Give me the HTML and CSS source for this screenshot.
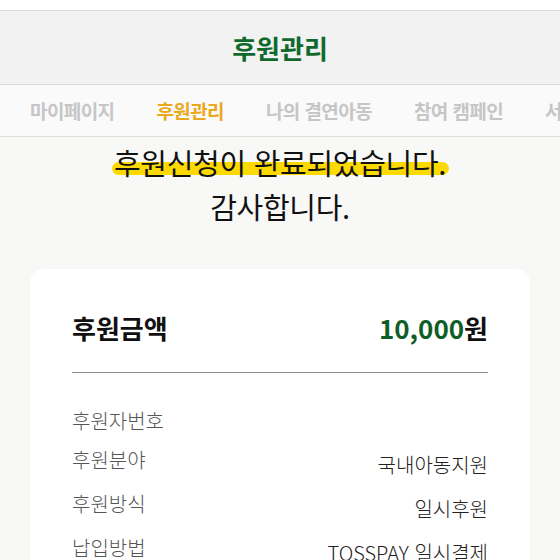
FILE: index.html
```html
<!DOCTYPE html>
<html lang="ko">
<head>
<meta charset="utf-8">
<link rel="stylesheet" href="styles.css">
</head>
<body>
<div class="topbar"></div>
<header class="header"><h1 class="title">후원관리</h1></header>
<nav class="tabs">
  <span class="tab">마이페이지</span>
  <span class="tab active">후원관리</span>
  <span class="tab">나의 결연아동</span>
  <span class="tab">참여 캠페인</span>
  <span class="tab">서비스 신청내역</span>
</nav>
<main class="content">
  <div class="message">
    <span class="hl">후원신청이 완료되었습니다.</span><br>
    감사합니다.
  </div>
  <section class="card">
    <div class="amount-row">
      <span class="amount-label">후원금액</span>
      <span class="amount-value"><span class="num">10,000</span>원</span>
    </div>
    <div class="rows">
      <div class="row"><span class="label">후원자번호</span><span class="value"></span></div>
      <div class="row"><span class="label">후원분야</span><span class="value">국내아동지원</span></div>
      <div class="row"><span class="label">후원방식</span><span class="value">일시후원</span></div>
      <div class="row"><span class="label">납입방법</span><span class="value">TOSSPAY 일시결제</span></div>
    </div>
  </section>
</main>
</body>
</html>
```
FILE: styles.css
```css
* { box-sizing: border-box; }
html, body { margin: 0; padding: 0; }
body {
  background: #f8f8f6;
  font-family: "Noto Sans CJK KR", "Noto Sans", sans-serif;
  color: #111;
  overflow: hidden;
}
.topbar { height: 10px; background: #fff; }
.header {
  height: 75px;
  background: #f2f2f2;
  border-top: 1px solid #dcdcdc;
  border-bottom: 1px solid #dcdcdc;
  display: flex;
  align-items: center;
  justify-content: center;
}
.title {
  margin: 0;
  font-size: 26px;
  font-weight: 700;
  color: #10692c;
  letter-spacing: 0;
}
.tabs {
  height: 52px;
  background: #fafafa;
  border-bottom: 1px solid #dcdcdc;
  display: flex;
  align-items: center;
  gap: 42px;
  padding-left: 30px;
  white-space: nowrap;
  overflow: hidden;
}
.tab {
  font-size: 19px;
  font-weight: 700;
  color: #c6c6c6;
  letter-spacing: -0.6px;
  flex: none;
}
.tab.active { color: #eaa91c; }
.content { padding-top: 3px; }
.message {
  text-align: center;
  font-size: 29px;
  line-height: 44px;
  color: #111;
  letter-spacing: -0.3px;
}
.hl {
  display: inline-block;
  position: relative;
  z-index: 0;
}
.hl::before {
  content: "";
  position: absolute;
  left: -2px;
  right: -3px;
  bottom: 9px;
  height: 13px;
  border-radius: 7px;
  background: #fcd900;
  z-index: -1;
}
.card {
  margin: 41px 30px 0;
  background: #fff;
  border-radius: 14px;
  padding: 42px 42px 40px;
  min-height: 400px;
}
.amount-row {
  display: flex;
  justify-content: space-between;
  align-items: center;
  line-height: 34px;
  padding-bottom: 27px;
  border-bottom: 1.5px solid #8a8a8a;
}
.amount-label { font-size: 26px; font-weight: 700; color: #111; }
.amount-value { font-size: 26px; font-weight: 700; color: #111; }
.amount-value .num { color: #0d5e26; }
.rows {
  padding-top: 34px;
  display: flex;
  flex-direction: column;
  gap: 11px;
}
.row {
  display: flex;
  justify-content: space-between;
  align-items: flex-start;
}
.label {
  font-size: 20px;
  line-height: 28px;
  color: #555;
  font-weight: 300;
}
.value {
  margin-top: 5px;
  font-size: 20px;
  line-height: 28px;
  color: #222;
  font-weight: 300;
}
```
